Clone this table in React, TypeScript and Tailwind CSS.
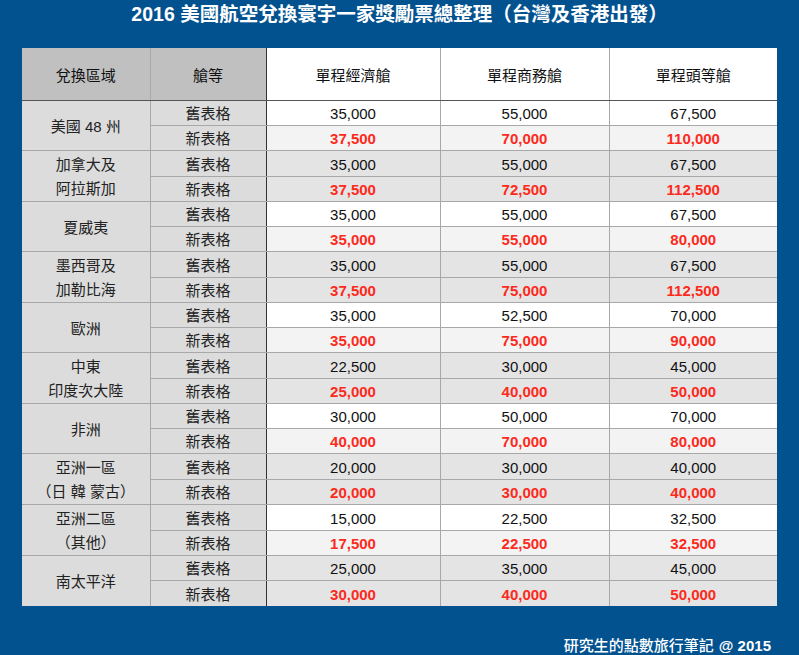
import React from 'react';

interface Region {
  name: string[];
  oldFares: string[];
  newFares: string[];
}

const regions: Region[] = [
  { name: ['美國 48 州'], oldFares: ['35,000', '55,000', '67,500'], newFares: ['37,500', '70,000', '110,000'] },
  { name: ['加拿大及', '阿拉斯加'], oldFares: ['35,000', '55,000', '67,500'], newFares: ['37,500', '72,500', '112,500'] },
  { name: ['夏威夷'], oldFares: ['35,000', '55,000', '67,500'], newFares: ['35,000', '55,000', '80,000'] },
  { name: ['墨西哥及', '加勒比海'], oldFares: ['35,000', '55,000', '67,500'], newFares: ['37,500', '75,000', '112,500'] },
  { name: ['歐洲'], oldFares: ['35,000', '52,500', '70,000'], newFares: ['35,000', '75,000', '90,000'] },
  { name: ['中東', '印度次大陸'], oldFares: ['22,500', '30,000', '45,000'], newFares: ['25,000', '40,000', '50,000'] },
  { name: ['非洲'], oldFares: ['30,000', '50,000', '70,000'], newFares: ['40,000', '70,000', '80,000'] },
  { name: ['亞洲一區', '（日 韓 蒙古）'], oldFares: ['20,000', '30,000', '40,000'], newFares: ['20,000', '30,000', '40,000'] },
  { name: ['亞洲二區', '（其他）'], oldFares: ['15,000', '22,500', '32,500'], newFares: ['17,500', '22,500', '32,500'] },
  { name: ['南太平洋'], oldFares: ['25,000', '35,000', '45,000'], newFares: ['30,000', '40,000', '50,000'] }
];

const cell = 'border border-[#a8a8a8] text-center p-0 pt-[2px] h-[25px] leading-[20px]';
const head = 'h-[52.5px] border border-[#a8a8a8] border-b-[#555] font-normal p-0 pt-[3px]';

export default function App() {
  return (
    <div
      className="w-[799px] h-[655px] bg-[#035290] flex flex-col text-[#111]"
      style={{ fontFamily: '"Liberation Sans", "Noto Sans CJK TC", sans-serif' }}
    >
      <div className="h-[32px] flex items-center justify-center text-white text-[19.5px] font-bold">
        2016 美國航空兌換寰宇一家獎勵票總整理（台灣及香港出發）
      </div>

      <table className="mt-[19px] ml-[22px] border-collapse border-hidden table-fixed w-[755px] text-[15px]">
        <colgroup>
          <col className="w-[128px]" />
          <col className="w-[116px]" />
          <col className="w-[174px]" />
          <col className="w-[169px]" />
          <col className="w-[168px]" />
        </colgroup>
        <thead>
          <tr>
            <th className={`${head} bg-[#c0c0c0]`}>兌換區域</th>
            <th className={`${head} bg-[#c0c0c0] border-r-[#333]`}>艙等</th>
            <th className={`${head} bg-white`}>單程經濟艙</th>
            <th className={`${head} bg-white`}>單程商務艙</th>
            <th className={`${head} bg-white`}>單程頭等艙</th>
          </tr>
        </thead>
        <tbody>
          {regions.map((r, i) => {
            const even = i % 2 === 1;
            const oldBg = even ? 'bg-[#e4e4e4]' : 'bg-white';
            const newBg = even ? 'bg-[#e4e4e4]' : 'bg-[#f3f3f3]';
            return (
              <React.Fragment key={i}>
                <tr>
                  <td rowSpan={2} className="border border-[#a8a8a8] bg-[#dcdcdc] text-center p-0 pt-[2px] leading-[24px] text-[#222]">
                    {r.name.map((line) => (
                      <div key={line}>{line}</div>
                    ))}
                  </td>
                  <td className={`${cell} bg-[#dcdcdc] border-r-[#333] text-[#222]`}>舊表格</td>
                  {r.oldFares.map((f, j) => (
                    <td key={j} className={`${cell} ${oldBg}`}>{f}</td>
                  ))}
                </tr>
                <tr>
                  <td className={`${cell} bg-[#dcdcdc] border-r-[#333] text-[#222]`}>新表格</td>
                  {r.newFares.map((f, j) => (
                    <td key={j} className={`${cell} ${newBg} text-[#fc2a1c] font-bold`}>{f}</td>
                  ))}
                </tr>
              </React.Fragment>
            );
          })}
        </tbody>
      </table>

      <div className="mt-[30px] flex justify-end pr-[28px] text-white text-[15px] leading-[20px]">
        <span className="font-medium">研究生的點數旅行筆記</span>
        <span className="font-bold pl-[1px]">&nbsp;@ 2015</span>
      </div>
    </div>
  );
}
